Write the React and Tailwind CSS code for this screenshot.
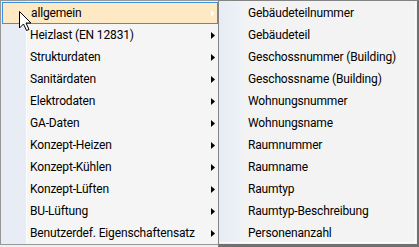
import React from 'react';

const leftItems = [
  'allgemein',
  'Heizlast (EN 12831)',
  'Strukturdaten',
  'Sanitärdaten',
  'Elektrodaten',
  'GA-Daten',
  'Konzept-Heizen',
  'Konzept-Kühlen',
  'Konzept-Lüften',
  'BU-Lüftung',
  'Benutzerdef. Eigenschaftensatz',
];

const rightItems = [
  'Gebäudeteilnummer',
  'Gebäudeteil',
  'Geschossnummer (Building)',
  'Geschossname (Building)',
  'Wohnungsnummer',
  'Wohnungsname',
  'Raumnummer',
  'Raumname',
  'Raumtyp',
  'Raumtyp-Beschreibung',
  'Personenanzahl',
];

const Arrow = ({ white }) => (
  <svg width="4" height="7" viewBox="0 0 4 7" className="absolute right-[3px] top-[8px]">
    <path d="M0 0 L4 3.5 L0 7 Z" fill={white ? '#ffffff' : '#000000'} />
  </svg>
);

const Cursor = () => (
  <svg width="13" height="21" viewBox="0 0 13 21" className="absolute left-[19px] top-[11px]">
    <path
      d="M0.5 0.5 L0.5 17 L4.5 13 L7.5 19.5 L10 18.5 L7 12 L12 12 Z"
      fill="#ffffff"
      stroke="#000000"
      strokeWidth="1"
      strokeLinejoin="miter"
    />
  </svg>
);

const App = () => {
  return (
    <div
      className="relative w-[419px] h-[247px] flex items-start bg-[#f0f0f0] text-[12px] tracking-[-0.15px] text-black"
      style={{ fontFamily: 'Roboto, "Noto Sans", sans-serif' }}
    >
      {/* main menu */}
      <div className="w-[220px] h-[245px] border border-[#979797] p-px bg-[linear-gradient(to_right,#e8edf5_25px,#fcfcfc_25px,#fcfcfc_26px,#f5f5f5_26px)]">
        {leftItems.map((item, i) => (
          <div
            key={item}
            className={
              'relative h-[22px] flex items-center pl-[28px] ' +
              (i === 0 ? 'bg-[#fde9c3] border border-[#3b91e3] pl-[27px]' : '')
            }
          >
            <span className="leading-none">{item}</span>
            {i > 0 && <Arrow />}
            {i === 0 && (
              <svg width="4" height="7" viewBox="0 0 4 7" className="absolute right-[2px] top-[7px]">
                <path d="M0 0 L4 3.5 L0 7 Z" fill="#ffffff" />
              </svg>
            )}
          </div>
        ))}
      </div>

      {/* sub menu */}
      <div className="-ml-[2px] w-[201px] h-[247px] border-l border-t border-[#838383] border-r-2 border-b-[3px] border-r-[#707070] border-b-[#707070] p-px bg-[linear-gradient(to_right,#e6ebf4_0px,#edf1f7_20px,#f3f3f3_26px,#f3f3f3_100%)]">
        <div className="h-full border-r border-b border-[#fbfbfb]">
          {rightItems.map((item) => (
            <div key={item} className="h-[22px] flex items-center pl-[28px]">
              <span className="leading-none">{item}</span>
            </div>
          ))}
        </div>
      </div>

      <Cursor />
    </div>
  );
};

export default App;
